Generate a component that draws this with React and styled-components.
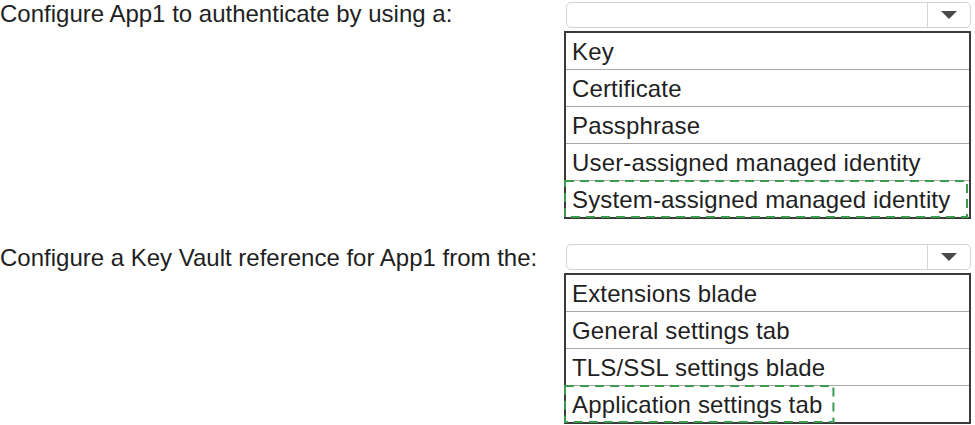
import React from 'react';
import styled, { createGlobalStyle } from 'styled-components';

const GlobalStyle = createGlobalStyle`
  html, body {
    margin: 0;
    padding: 0;
    background: #ffffff;
  }
`;

const Page = styled.div`
  font-family: "Liberation Sans", Arial, sans-serif;
  color: #1f1f1f;
  width: 975px;
`;

const Question = styled.section`
  display: flex;
  align-items: flex-start;

  & + & {
    margin-top: 23px;
  }
`;

const Prompt = styled.div`
  width: 564px;
  flex-shrink: 0;
  font-size: 24px;
  line-height: 28px;
  margin-top: ${(p) => p.$offset}px;
  white-space: nowrap;
`;

const Dropdown = styled.div`
  width: 407px;
  display: flex;
  flex-direction: column;
`;

const Select = styled.div`
  box-sizing: border-box;
  height: 26px;
  margin: 2px 0 0 2px;
  display: flex;
  border: 1px solid #d2d2d2;
  border-radius: 5px;
  background: #fff;
`;

const SelectField = styled.div`
  flex: 1;
`;

const ArrowBox = styled.div`
  width: 42px;
  border-left: 1px solid #d4d4d4;
  display: flex;
  align-items: center;
  justify-content: center;
`;

const Arrow = styled.span`
  width: 0;
  height: 0;
  border-left: 8px solid transparent;
  border-right: 8px solid transparent;
  border-top: 8px solid #4a4a4a;
`;

const OptionList = styled.ul`
  list-style: none;
  margin: 3px 0 0;
  padding: 0;
  border: 2px solid #3a3a3a;
`;

const Option = styled.li`
  position: relative;
  height: 36px;
  line-height: 37px;
  padding-left: 6px;
  font-size: 24px;
  letter-spacing: 0.15px;
  white-space: nowrap;

  & + & {
    border-top: 1px solid #a8a8a8;
  }
`;

const OptionText = styled.span`
  position: relative;
  display: inline-block;
  padding-right: ${(p) => (p.$marked ? '12px' : '0')};
`;

// dashed answer frame laid over the chosen option
const Highlight = styled.svg`
  position: absolute;
  top: -1px;
  left: ${(p) => (p.$wide ? '-2px' : '-8px')};
  width: ${(p) => (p.$wide ? 'calc(100% + 1px)' : 'calc(100% + 8px)')};
  height: 38px;
  overflow: visible;
  pointer-events: none;
`;

const DashedRect = styled.rect`
  x: 1px;
  y: 1px;
  width: calc(100% - 2px);
  height: calc(100% - 2px);
  fill: none;
  stroke: #3c9c4e;
  stroke-width: 2;
  stroke-dasharray: 9 6;
`;

const questions = [
  {
    prompt: 'Configure App1 to authenticate by using a:',
    offset: 0,
    options: [
      'Key',
      'Certificate',
      'Passphrase',
      'User-assigned managed identity',
      'System-assigned managed identity',
    ],
    answer: 4,
    wide: true,
  },
  {
    prompt: 'Configure a Key Vault reference for App1 from the:',
    offset: 2,
    options: [
      'Extensions blade',
      'General settings tab',
      'TLS/SSL settings blade',
      'Application settings tab',
    ],
    answer: 3,
    wide: false,
  },
];

const Marked = ({ children, wide }) =>
  wide ? (
    <>
      <Highlight $wide>
        <DashedRect />
      </Highlight>
      <OptionText>{children}</OptionText>
    </>
  ) : (
    <OptionText $marked>
      <Highlight>
        <DashedRect />
      </Highlight>
      {children}
    </OptionText>
  );

export default function App() {
  return (
    <>
      <GlobalStyle />
      <Page>
        {questions.map((q) => (
          <Question key={q.prompt}>
            <Prompt $offset={q.offset}>{q.prompt}</Prompt>
            <Dropdown>
              <Select>
                <SelectField />
                <ArrowBox>
                  <Arrow />
                </ArrowBox>
              </Select>
              <OptionList>
                {q.options.map((opt, i) => (
                  <Option key={opt}>
                    {i === q.answer ? (
                      <Marked wide={q.wide}>{opt}</Marked>
                    ) : (
                      opt
                    )}
                  </Option>
                ))}
              </OptionList>
            </Dropdown>
          </Question>
        ))}
      </Page>
    </>
  );
}
